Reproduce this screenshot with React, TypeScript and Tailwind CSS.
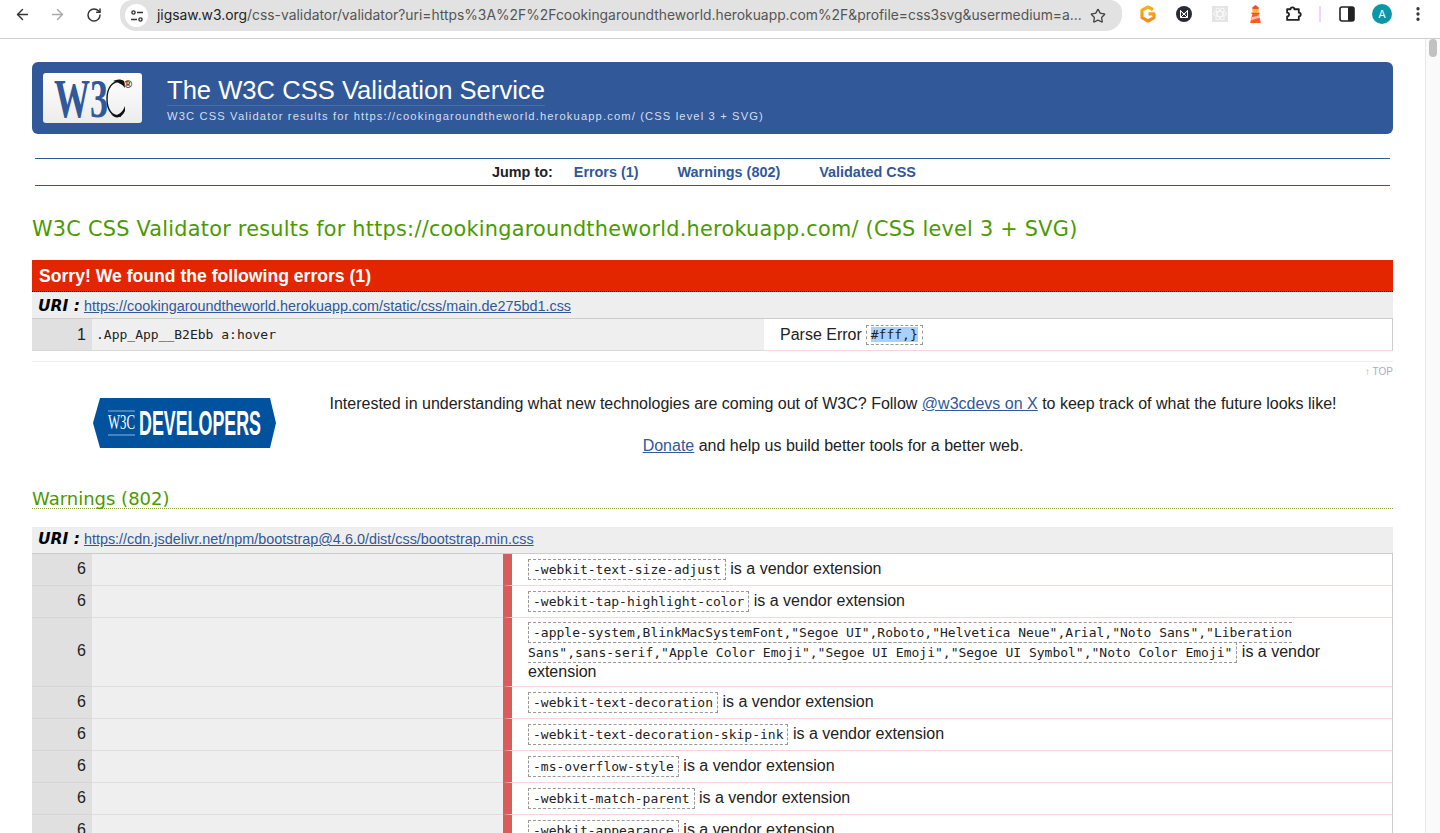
import { ArrowLeft, ArrowRight, MoreVertical, RotateCw, Star } from 'lucide-react'
import React from 'react'

const mono = "font-['DejaVu_Sans_Mono',monospace]"
const verdana = "font-['DejaVu_Sans',sans-serif]"

const Code = ({ children }: { children: React.ReactNode }) => (
    <span className={`${mono} border border-dashed border-[#999] px-[4px] py-[2px] text-[13px] text-[#222]`}>
        {children}
    </span>
)

const BrowserBar = () => (
    <div className="flex h-[39px] shrink-0 items-start border-b border-[#cfcfcf] bg-white">
        <div className="flex h-[29px] items-center">
            <ArrowLeft className="ml-[14px] h-[17px] w-[17px] text-[#333]" strokeWidth={2} />
            <ArrowRight className="ml-[18px] h-[17px] w-[17px] text-[#aaa]" strokeWidth={2} />
            <RotateCw className="ml-[20px] h-[16px] w-[16px] text-[#333]" strokeWidth={2.2} />
        </div>
        <div className="ml-[18px] flex h-[31px] w-[1002px] items-center rounded-b-[16px] rounded-t-[12px] bg-[#e2e2e2] pl-[5px]">
            <div className="flex h-[23px] w-[23px] items-center justify-center rounded-full bg-white">
                <svg viewBox="0 0 14 14" className="h-[14px] w-[14px]" fill="none" stroke="#333" strokeWidth="1.4">
                    <circle cx="3.5" cy="3.5" r="1.6" />
                    <path d="M7 3.5h6M1 10.5h6" />
                    <circle cx="10.5" cy="10.5" r="1.6" />
                </svg>
            </div>
            <div className="ml-[9px] font-['Inter',sans-serif] text-[13.870px] whitespace-nowrap text-[#555]">
                <span className="text-[#222]">jigsaw.w3.org</span>
                /css-validator/validator?uri=https%3A%2F%2Fcookingaroundtheworld.herokuapp.com%2F&amp;profile=css3svg&amp;usermedium=a...
            </div>
            <Star className="ml-auto mr-[16px] h-[16px] w-[16px] text-[#444]" strokeWidth={2} />
        </div>
        <div className="relative h-[29px] flex-1">
            <svg viewBox="0 0 18 18" className="absolute left-[17px] top-[5px] h-[18px] w-[18px]">
                <defs>
                    <linearGradient id="gMark" x1="0" y1="0" x2="0" y2="1">
                        <stop offset="0" stopColor="#fbb016" />
                        <stop offset="1" stopColor="#f58a1f" />
                    </linearGradient>
                </defs>
                <path d="M14 4.500L9 2 3 5.200v7.400L9 16l6-3.400V8.800H9.500" fill="none" stroke="url(#gMark)" strokeWidth="3.200" strokeLinejoin="round" />
            </svg>
            <svg viewBox="0 0 16 16" className="absolute left-[54px] top-[6px] h-[16px] w-[16px]">
                <circle cx="8" cy="8" r="8" fill="#2a2a36" />
                <path d="M4.500 4.500v7h7v-7L8 8.500z M4.500 4.500L11.500 11.500M11.500 4.500L4.500 11.500" fill="none" stroke="#fff" strokeWidth="1" />
            </svg>
            <svg viewBox="0 0 16 16" className="absolute left-[90px] top-[6px] h-[16px] w-[16px]">
                <rect width="16" height="16" fill="#e4e4e4" />
                <g fill="none" stroke="#fafafa" strokeWidth="0.9">
                    <ellipse cx="8" cy="8" rx="6.500" ry="2.600" />
                    <ellipse cx="8" cy="8" rx="6.500" ry="2.600" transform="rotate(60 8 8)" />
                    <ellipse cx="8" cy="8" rx="6.500" ry="2.600" transform="rotate(120 8 8)" />
                </g>
            </svg>
            <svg viewBox="0 0 14 20" className="absolute left-[127px] top-[5px] h-[18px] w-[13px]">
                <path d="M7 0l3.500 2.500V5h-7V2.500z" fill="#f4511e" />
                <rect x="3.500" y="5" width="7" height="3.500" fill="#fbc02d" />
                <rect x="2.500" y="8.500" width="9" height="1.500" fill="#f4511e" />
                <path d="M3.500 10h7l2.500 10H1z" fill="#ff5a1f" />
                <path d="M2.600 13.500l8.400-2 .7 2.800-9.900 2.700z" fill="#fcc4a8" />
            </svg>
            <svg viewBox="0 0 16 16" className="absolute left-[163px] top-[5px] h-[17px] w-[17px]" fill="none" stroke="#222" strokeWidth="1.700" strokeLinejoin="round">
                <path d="M2 4h3.200a1.800 1.800 0 0 1 3.600 0H13v3.200a1.800 1.800 0 0 1 0 3.600V14H2v-3.200a1.800 1.800 0 0 0 0-3.600z" />
            </svg>
            <div className="absolute left-[197px] top-[6px] h-[16px] w-[2px] bg-[#eed4f7]" />
            <svg viewBox="0 0 16 16" className="absolute left-[217px] top-[6px] h-[16px] w-[16px]">
                <rect x="1" y="1" width="14" height="14" rx="2" fill="#fff" stroke="#222" strokeWidth="1.600" />
                <rect x="9" y="1" width="6" height="14" rx="1" fill="#222" />
            </svg>
            <div className="absolute left-[250px] top-[4px] flex h-[20px] w-[20px] items-center justify-center rounded-full bg-[#0b97a8] font-['Inter',sans-serif] text-[11px] text-white">
                A
            </div>
            <MoreVertical className="absolute left-[287px] top-[5px] h-[18px] w-[18px] text-[#333]" strokeWidth={2.4} />
        </div>
    </div>
)

const W3cLogo = () => (
    <div className="flex h-[50px] w-[99px] items-center justify-center overflow-hidden rounded-[3px] bg-gradient-to-b from-white to-[#ececec]">
        <svg viewBox="0 0 99 50" className="h-[50px] w-[99px]">
            <text x="11" y="44" textLength="54" lengthAdjust="spacingAndGlyphs" fontFamily="Liberation Serif" fontSize="54" fontWeight="700" fill="#315898">
                W3
            </text>
            <path d="M78 8C69 8 64 15 64 26c0 11 5 18 14 17" fill="none" stroke="#111" strokeWidth="1.400" />
            <path d="M70 8c4-2 8-2 11 0l1 7c-3-4-7-6-12-7z" fill="#111" />
            <path d="M68 41c5 3 11 0 14-8l0 5c-4 8-10 8-14 3z" fill="#111" />
            <text x="81" y="15" fontFamily="Liberation Sans" fontSize="11" fontWeight="700" fill="#222">
                ®
            </text>
        </svg>
    </div>
)

const DevelopersLogo = () => (
    <svg viewBox="0 0 183 50" className="h-[50px] w-[183px]">
        <polygon points="7,0 177,0 183,25 177,50 7,50 0,25" fill="#00529f" />
        <line x1="15" y1="13" x2="42" y2="13" stroke="#cfe0f2" strokeWidth="0.700" />
        <line x1="15" y1="37" x2="42" y2="37" stroke="#cfe0f2" strokeWidth="0.700" />
        <text x="15" y="31" textLength="27" lengthAdjust="spacingAndGlyphs" fontFamily="Liberation Serif" fontSize="20" fill="#fff">
            W3C
        </text>
        <text x="46" y="37" textLength="122" lengthAdjust="spacingAndGlyphs" fontFamily="Liberation Sans" fontSize="35" fontWeight="700" fill="#fff">
            DEVELOPERS
        </text>
    </svg>
)

const UriRow = ({ href, className }: { href: string; className?: string }) => (
    <div className={`flex h-[26px] items-center bg-[#eeeeee] pl-[6px] text-[14.400px] ${className ?? ''}`}>
        <span className={`${verdana} mr-[4px] text-[15.500px] font-bold italic text-black`}>URI :</span>
        <a className="text-[#315898] underline">{href}</a>
    </div>
)

const WarningRow = ({ children, h }: { children: React.ReactNode; h: string }) => (
    <div className={`grid grid-cols-[60px_411px_1fr] ${h}`}>
        <div className="flex items-center justify-end border-b border-[#d6d6d6] bg-[#e0e0e0] pb-[2px] pr-[6px] text-[16px] text-[#222]">6</div>
        <div className="border-b border-[#dddddd] bg-[#efefef]" />
        <div className="flex items-center border-b border-r border-b-[#fbd4d4] border-r-[#cccccc] border-l-[9px] border-l-[#d95c5c] bg-white pb-[2px] pl-[16px] pr-[60px]">
            <div className="text-[16px] leading-[19px] text-[#222]">{children}</div>
        </div>
    </div>
)

const warnings = [
    '-webkit-text-decoration',
    '-webkit-text-decoration-skip-ink',
    '-ms-overflow-style',
    '-webkit-match-parent',
    '-webkit-appearance',
]

export default function App() {
    return (
        <div className="flex h-[833px] w-[1440px] flex-col overflow-hidden bg-white font-['Liberation_Sans',sans-serif]">
            <BrowserBar />
            <div className="flex min-h-0 flex-1">
                <div className="min-w-0 flex-1 overflow-hidden pl-[32px] pr-[32px] pt-[23px]">
                    <div className="flex h-[72px] items-center rounded-[6px] bg-[#315898] pl-[11px]">
                        <W3cLogo />
                        <div className="ml-[25px] flex flex-col items-start pt-[2px]">
                            <div className="border-b border-[#4a6fa8] text-[25.600px] leading-[30px] text-white">The W3C CSS Validation Service</div>
                            <div className="mt-[3px] text-[11.200px] leading-[14px] tracking-[1.130px] text-[#d5deec]">
                                W3C CSS Validator results for https://cookingaroundtheworld.herokuapp.com/ (CSS level 3 + SVG)
                            </div>
                        </div>
                    </div>

                    <div className="mx-[3px] mt-[24px] flex h-[28px] items-center justify-center gap-[39px] border-y border-[#315898] pr-[17px] pt-[1px] text-[14.400px] font-bold">
                        <div className="flex items-center gap-[21px]">
                            <span className="text-[#222]">Jump to:</span>
                            <a className="text-[#315898]">Errors (1)</a>
                        </div>
                        <a className="text-[#315898]">Warnings (802)</a>
                        <a className="text-[#315898]">Validated CSS</a>
                    </div>

                    <h2 className={`${verdana} mt-[30px] text-[20.800px] leading-[26px] tracking-[0.250px] text-[#4a9a00]`}>
                        W3C CSS Validator results for https://cookingaroundtheworld.herokuapp.com/ (CSS level 3 + SVG)
                    </h2>

                    <div className="mt-[18px] h-[32px] border-b border-dotted border-black bg-[#e32600] pl-[7px] text-[17.600px] font-bold leading-[32px] text-white">
                        Sorry! We found the following errors (1)
                    </div>
                    <UriRow href="https://cookingaroundtheworld.herokuapp.com/static/css/main.de275bd1.css" className="pt-[3px]" />
                    <div className="grid h-[33px] grid-cols-[60px_672px_1fr] border-t border-[#cccccc]">
                        <div className="flex items-center justify-end border-b border-[#d8d8d8] bg-[#e0e0e0] pr-[6px] text-[16px] text-[#222]">1</div>
                        <div className={`${mono} flex items-center border-b border-[#d8d8d8] bg-[#efefef] pl-[4px] text-[13px] text-[#222]`}>.App_App__B2Ebb a:hover</div>
                        <div className="flex items-center border-b border-r border-b-[#fbd4d4] border-r-[#cccccc] pl-[16px] text-[16px] text-[#222]">
                            Parse Error
                            <span className={`${mono} ml-[4px] border border-dashed border-[#999] px-[4px] text-[13px] leading-[18px]`}>
                                <span className="bg-[#a9d1ff]">#fff,{'}'}</span>
                            </span>
                        </div>
                    </div>

                    <div className="mt-[10px] border-t border-[#eeeef8] pt-[3px] text-right text-[10px] leading-[14px] text-[#aaaacc]">↑ TOP</div>

                    <div className="mt-[19px] flex h-[50px] items-start">
                        <div className="ml-[61px] shrink-0">
                            <DevelopersLogo />
                        </div>
                        <div className="ml-[53px] w-[1008px] text-center text-[16px] leading-[20px] text-[#222]">
                            <p className="-mt-[4px] whitespace-nowrap">
                                Interested in understanding what new technologies are coming out of W3C? Follow{' '}
                                <a className="text-[#315898] underline">@w3cdevs on X</a> to keep track of what the future looks like!
                            </p>
                            <p className="mt-[22px]">
                                <a className="text-[#315898] underline">Donate</a> and help us build better tools for a better web.
                            </p>
                        </div>
                    </div>

                    <h2 className={`${verdana} mt-[41px] border-b border-dotted border-[#8fa63c] text-[18px] leading-[19px] text-[#4a9a00]`}>Warnings (802)</h2>

                    <div className="mt-[18px]">
                        <UriRow href="https://cdn.jsdelivr.net/npm/bootstrap@4.6.0/dist/css/bootstrap.min.css" />
                        <div className="border-t border-[#cccccc]">
                            <WarningRow h="h-[32px]">
                                <Code>-webkit-text-size-adjust</Code> is a vendor extension
                            </WarningRow>
                            <WarningRow h="h-[32px]">
                                <Code>-webkit-tap-highlight-color</Code> is a vendor extension
                            </WarningRow>
                            <WarningRow h="h-[69px]">
                                <Code>
                                    -apple-system,BlinkMacSystemFont,"Segoe UI",Roboto,"Helvetica Neue",Arial,"Noto Sans","Liberation Sans",sans-serif,"Apple Color Emoji","Segoe UI Emoji","Segoe UI Symbol","Noto Color Emoji"
                                </Code>{' '}
                                is a vendor extension
                            </WarningRow>
                            {warnings.map((w) => (
                                <WarningRow key={w} h="h-[32px]">
                                    <Code>{w}</Code> is a vendor extension
                                </WarningRow>
                            ))}
                        </div>
                    </div>
                </div>
                <div className="w-[15px] shrink-0 border-l border-[#e8e8e8] bg-[#fafafa] px-[3px]">
                    <div className="h-[18px] w-[8px] rounded-[4px] bg-[#c1c1c1]" />
                </div>
            </div>
        </div>
    )
}
